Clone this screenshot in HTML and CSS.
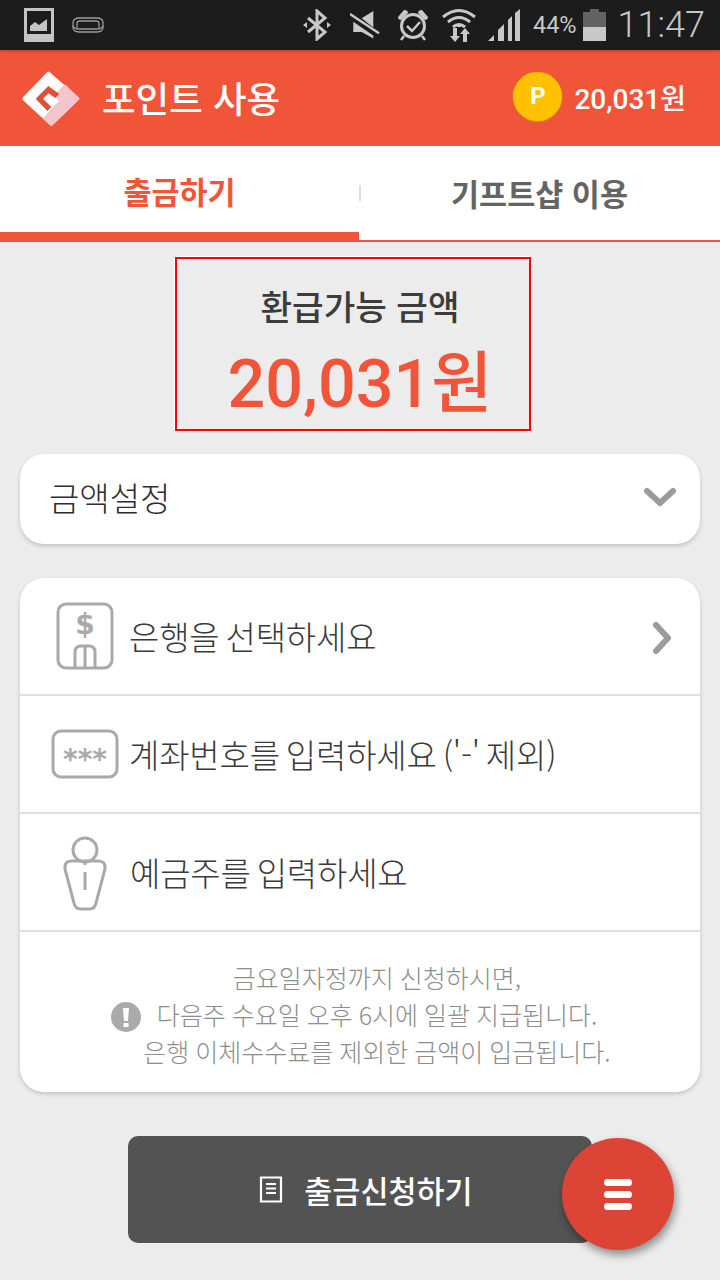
FILE: index.html
```html
<!DOCTYPE html>
<html lang="ko">
<head>
<meta charset="utf-8">
<title>포인트 사용</title>
<link rel="stylesheet" href="styles.css">
</head>
<body>
<div class="phone">
  <div class="status">
    <svg class="st-pic" width="30" height="34" viewBox="0 0 30 34"><path fill="#c4c4c4" fill-rule="evenodd" d="M0 0h30v34H0zM3 3v23h24V3z"/><path fill="#c4c4c4" d="M6 23v-5l5-4 4 3 8-6v12z"/></svg>
    <svg class="st-ring" width="32" height="18" viewBox="0 0 32 18"><g fill="none" stroke="#9a9a9a" stroke-width="1.300"><path d="M1 7q0-5 6-5h18q6 0 6 5v4q0 5-6 5H7q-6 0-6-5z"/><path d="M5 12V7q0-2 3-2h16q3 0 3 2v5M1 10q1 3 6 3h18q5 0 6-3"/></g></svg>
    <span class="st-space"></span>
    <svg class="st-bt" width="30" height="32" viewBox="0 0 30 32"><path fill="none" stroke="#c8c8c8" stroke-width="3" d="M6 9l17 14-8 7V2l8 7L6 23"/><path fill="#c8c8c8" d="M1 16l4-3v6zM29 16l-4-3v6z"/></svg>
    <svg class="st-mute" width="30" height="28" viewBox="0 0 30 28"><path fill="#c8c8c8" d="M11.700 7.300L23.300 0v16.500zM3.300 10.700l20 13.800v3l-11.600-6.500H3.300z"/><path stroke="#c8c8c8" stroke-width="2.500" d="M0 3l29 19.300"/></svg>
    <svg class="st-alarm" width="32" height="32" viewBox="0 0 32 32"><g fill="none" stroke="#c8c8c8"><circle cx="16" cy="17" r="11.500" stroke-width="3"/><path stroke-width="2.500" d="M10 17l5 5 8-9M7 27l-3 4M25 27l3 4"/></g><path fill="#c8c8c8" d="M1 8l6-7q4 0 4 3L4 11q-3 0-3-3zM31 8l-6-7q-4 0-4 3l7 7q3 0 3-3z"/></svg>
    <svg class="st-wifi" width="34" height="34" viewBox="0 0 34 34"><g fill="none" stroke="#c8c8c8" stroke-width="3"><path d="M1 9q16-13 32 0M6 14q11-9 22 0M11 19q6-5 12 0"/></g><path fill="#c8c8c8" d="M15 16h4v3h-4zM11 20h4v8h3l-5 6-5-6h3zM21 34v-8h-3l5-6 5 6h-3v8z"/></svg>
    <svg class="st-sig" width="32" height="32" viewBox="0 0 32 32"><path fill="#c8c8c8" d="M0 32l6-6v6zM10 32V21l6-6v17zM20 32V11l4-4v25zM27 32V4l5-4v32z"/></svg>
    <span class="st-pct">44%</span>
    <svg class="st-bat" width="23" height="32" viewBox="0 0 23 32"><path fill="#636363" d="M7 0h9v3h7v15H0V3h7z"/><path fill="#c8c8c8" d="M0 18h23v14H0z"/></svg>
    <span class="st-time">11:47</span>
  </div>

  <header class="appbar">
    <svg class="logo" width="70" height="65" viewBox="0 0 210 195">
      <path fill="#fff" stroke="#fff" stroke-width="10" stroke-linejoin="round" d="M100 22L188 98 109 174 27 98z"/>
      <path fill="#f4c6cc" stroke="#f4c6cc" stroke-width="8" stroke-linejoin="round" d="M150 60l38 38-78 76-21-17 48-52-14-18z"/>
      <path fill="#e05038" d="M100 60l33 24-12 12-21-14-16 16 25 25-12 12-35-37z"/>
    </svg>
    <h1 class="title">포인트 사용</h1>
    <span class="coin">P</span>
    <span class="balance">20,031원</span>
  </header>

  <nav class="tabs">
    <div class="tab tab-active">출금하기</div>
    <div class="tab tab-other"><span class="tab-sep"></span>기프트샵 이용</div>
  </nav>

  <main class="content">
    <section class="refund">
      <div class="refund-label">환급가능 금액</div>
      <div class="refund-amount">20,031원</div>
    </section>

    <section class="card amount-card">
      <span class="amount-text">금액설정</span>
      <svg class="chev-down" width="34" height="22" viewBox="0 0 34 22"><path fill="none" stroke="#9b9b9b" stroke-width="6" stroke-linecap="round" stroke-linejoin="round" d="M4 5l13 12L30 5"/></svg>
    </section>

    <section class="card form-card">
      <div class="row row-bank">
        <svg class="ico" width="60" height="68" viewBox="0 0 60 68"><g fill="none" stroke="#a9a9a9"><rect x="3" y="2" width="54" height="64" rx="8" stroke-width="3"/><path stroke-width="3" d="M20 66V50q0-6 6-6h8q6 0 6 6v16M30 44v22"/></g><text class="ico-dollar" x="30" y="32" text-anchor="middle">$</text></svg>
        <span class="row-text">은행을 선택하세요</span>
        <svg class="chev-right" width="24" height="34" viewBox="0 0 24 34"><path fill="none" stroke="#9b9b9b" stroke-width="6" stroke-linecap="round" stroke-linejoin="round" d="M6 4l12 13L6 30"/></svg>
      </div>
      <div class="row row-account">
        <svg class="ico" width="68" height="50" viewBox="0 0 68 50"><rect x="2" y="2" width="64" height="46" rx="8" fill="none" stroke="#a9a9a9" stroke-width="3"/><text class="ico-stars" x="34" y="40" text-anchor="middle">***</text></svg>
        <span class="row-text">계좌번호를 입력하세요 ('-' 제외)</span>
      </div>
      <div class="row row-holder">
        <svg class="ico ico-person" width="46" height="76" viewBox="0 0 46 76"><g fill="none" stroke="#a9a9a9" stroke-width="3"><circle cx="23" cy="14" r="12"/><path d="M10 25h26q8 0 7 8l-9 34q-1 6-7 6h-8q-6 0-7-6L3 33q-1-8 7-8z"/><path d="M23 26v3M23 36v18"/></g></svg>
        <span class="row-text">예금주를 입력하세요</span>
      </div>
      <div class="notice">
        <p class="notice-line">금요일자정까지 신청하시면,</p>
        <p class="notice-line notice-mid"><svg class="notice-ico" width="30" height="30" viewBox="0 0 30 30"><circle cx="15" cy="15" r="15" fill="#aaa"/><path fill="#fff" d="M12 6h6l-1 13h-4zM12.500 21h5v4h-5z"/></svg>다음주 수요일 오후 6시에 일괄 지급됩니다.</p>
        <p class="notice-line">은행 이체수수료를 제외한 금액이 입금됩니다.</p>
      </div>
    </section>

    <div class="submit-wrap">
      <button class="submit"><svg class="submit-ico" width="24" height="27" viewBox="0 0 24 27"><path fill="none" stroke="#fff" stroke-width="2.200" d="M2 1.500h20v24H2zM7 8h10M7 12.500h10M7 17h10"/></svg>출금신청하기</button>
    </div>
  </main>

  <button class="fab" aria-label="메뉴"><span class="bar"></span><span class="bar"></span><span class="bar"></span></button>
</div>
</body>
</html>
```

FILE: styles.css
```css
* { box-sizing: border-box; }
html, body { margin: 0; padding: 0; }
body {
  font-family: "Noto Sans CJK KR", Roboto, "Noto Sans", sans-serif;
  background: #ececec;
}
.phone {
  position: relative;
  width: 720px;
  height: 1280px;
  overflow: hidden;
  background: #ececec;
}

/* status bar */
.status {
  position: relative;
  z-index: 1;
  height: 50px;
  background: #1c1c1c;
  box-shadow: 0 1px 3px rgba(120, 40, 20, .5);
  display: flex;
  align-items: center;
  padding: 0 15px 0 24px;
}
.st-pic { margin-right: 18px; }
.st-space { flex: 1; }
.st-bt { margin-right: 18px; }
.st-mute { margin-right: 17px; }
.st-alarm { margin-right: 13px; margin-top: -1px; }
.st-wifi { margin-right: 12px; }
.st-sig { margin-right: 13px; }
.st-pct {
  font: 23.500px Roboto, sans-serif;
  color: #c8c8c8;
  margin-right: 6px;
}
.st-bat { margin-right: 12px; }
.st-time {
  font: 300 36px Roboto, sans-serif;
  color: #c8c8c8;
}

/* app bar */
.appbar {
  height: 96px;
  background: #f0553a;
  display: flex;
  align-items: center;
  padding: 0 34px 0 15px;
}
.logo { margin-right: 17px; }
.title {
  flex: 1;
  margin: 0;
  font-size: 36.500px;
  font-weight: 500;
  line-height: 48px;
  color: #fff;
}
.coin {
  width: 49px;
  height: 49px;
  margin-top: -3px;
  border-radius: 50%;
  background: #ffc100;
  box-shadow: 0 1px 1px #d88a20, 0 0 1px #e59a20;
  color: #fff;
  font: 700 24px/48px Roboto, sans-serif;
  text-align: center;
  margin-right: 12px;
}
.balance {
  font-family: Roboto, "Noto Sans CJK KR", sans-serif;
  font-size: 28px;
  font-weight: 500;
  color: #fff;
  line-height: 40px;
  margin-top: 4px;
}

/* tabs */
.tabs {
  height: 96px;
  display: flex;
  background: #fff;
}
.tab {
  display: flex;
  align-items: center;
  justify-content: center;
  font-size: 30.500px;
  font-weight: 700;
}
.tab-active {
  flex: 0 0 359px;
  color: #f0553a;
  border-bottom: 10px solid #f0553a;
  padding-top: 4px;
}
.tab-other {
  flex: 1;
  position: relative;
  color: #646464;
  border-bottom: 2px solid #f0553a;
}
.tab-sep {
  position: absolute;
  left: 0;
  top: 39px;
  width: 2px;
  height: 16px;
  background: #ddd;
}

/* content */
.content {
  display: flex;
  flex-direction: column;
  align-items: stretch;
  padding: 15px 20px 0;
}
.refund {
  align-self: center;
  width: 356px;
  height: 174px;
  margin-left: -14px;
  padding-left: 14px;
  border: 2px solid #f00;
  outline: 1px solid #fff;
  display: flex;
  flex-direction: column;
  align-items: center;
}
.refund-label {
  margin-top: 21px;
  font-size: 34.300px;
  font-weight: 500;
  line-height: 50px;
  color: #3c3c3c;
}
.refund-amount {
  margin-top: 14px;
  font-family: Roboto, "Noto Sans CJK KR", sans-serif;
  font-size: 66.500px;
  font-weight: 500;
  line-height: 80px;
  color: #f0553a;
}
.card {
  background: #fff;
  border-radius: 24px;
  box-shadow: 0 2px 4px rgba(0, 0, 0, .18);
}
.amount-card {
  margin-top: 23px;
  height: 90px;
  display: flex;
  align-items: center;
  justify-content: space-between;
  padding: 0 23px 4px 29px;
}
.amount-text {
  font-size: 33px;
  font-weight: 300;
  color: #2e2e2e;
}
.form-card {
  margin-top: 34px;
  height: 514px;
  display: flex;
  flex-direction: column;
}
.row {
  height: 118px;
  display: flex;
  align-items: center;
  position: relative;
  border-bottom: 2px solid #dedede;
}
.row-text {
  font-size: 33px;
  font-weight: 300;
  color: #3a3a3a;
  letter-spacing: -.2px;
  word-spacing: -3px;
}
.row-bank { padding-left: 35px; padding-right: 26px; }
.row-bank .row-text { flex: 1; margin-left: 14px; }
.row-account { padding-left: 31px; }
.row-account .row-text { margin-left: 10px; }
.row-holder { padding-left: 42px; }
.row-holder .row-text { margin-left: 22px; }
.ico-person { margin-top: 4px; }
.chev-right { margin-top: 4px; }
.ico-dollar {
  font: 700 28px "DejaVu Sans", sans-serif;
  fill: #a9a9a9;
}
.ico-stars {
  font: 700 28px "DejaVu Sans", sans-serif;
  fill: #a9a9a9;
}
.notice {
  flex: 1;
  display: flex;
  flex-direction: column;
  align-items: center;
  padding-top: 27px;
  padding-left: 34px;
}
.notice-line {
  margin: 0;
  font-size: 25px;
  font-weight: 300;
  line-height: 37px;
  color: #8d8d8d;
  word-spacing: -1px;
}
.notice-mid {
  position: relative;
}
.notice-ico {
  position: absolute;
  left: -46px;
  top: 6px;
}

/* submit */
.submit-wrap {
  margin-top: 44px;
  padding-left: 108px;
}
.submit {
  width: 464px;
  height: 107px;
  border: 0;
  border-radius: 10px;
  background: #535353;
  color: #fff;
  font-family: inherit;
  font-size: 30.500px;
  font-weight: 500;
  display: flex;
  align-items: center;
  justify-content: center;
  padding: 0 0 0 12px;
}
.submit-ico { margin-right: 21px; }

/* floating button */
.fab {
  position: absolute;
  left: 562px;
  top: 1138px;
  width: 112px;
  height: 112px;
  border: 0;
  border-radius: 50%;
  background: #dc4436;
  box-shadow: 2px 5px 8px rgba(0, 0, 0, .4);
  display: flex;
  flex-direction: column;
  align-items: center;
  justify-content: center;
  gap: 5px;
  padding: 0;
}
.bar {
  width: 28px;
  height: 7px;
  border-radius: 4px;
  background: #fff;
}
```
